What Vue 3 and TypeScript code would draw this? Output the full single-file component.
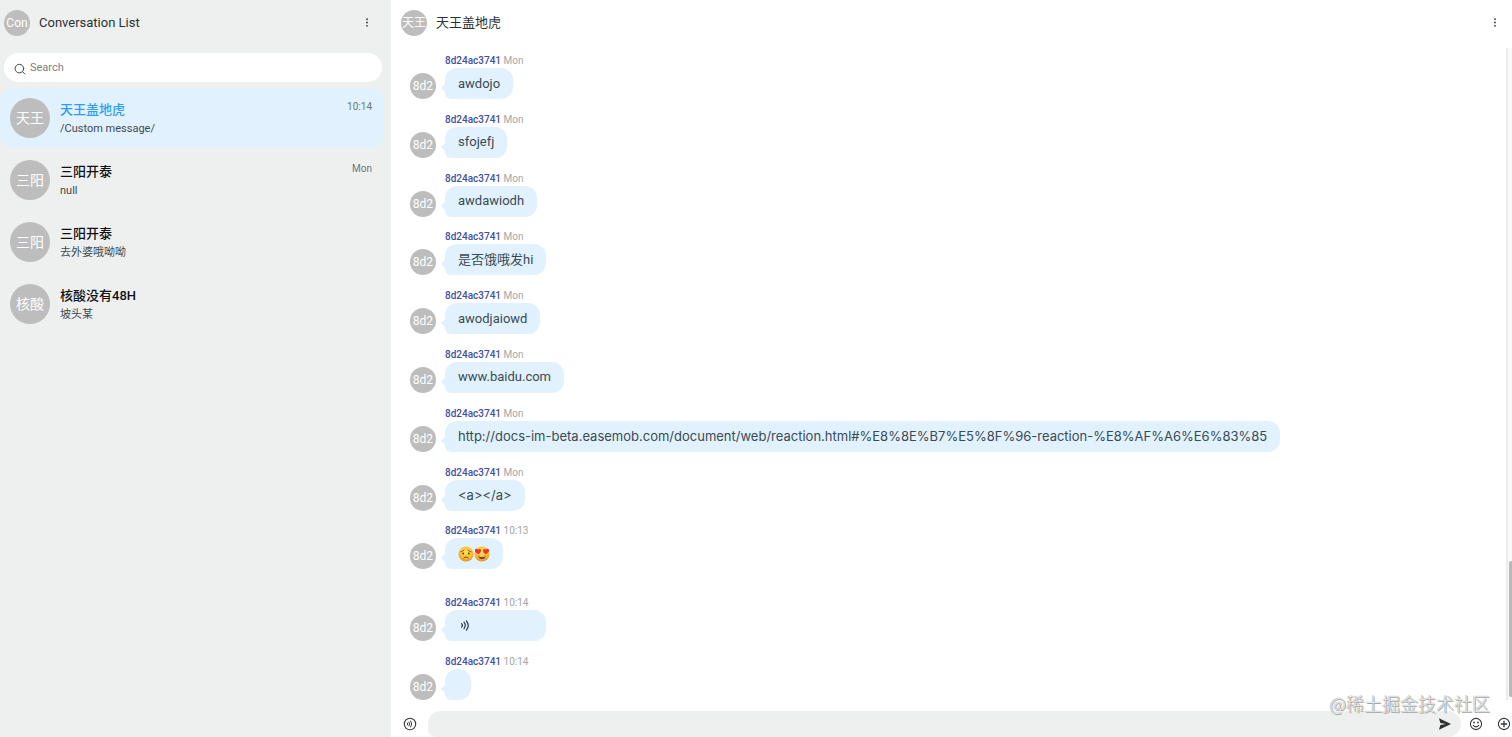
<script setup lang="ts">
import { ref } from 'vue'

interface Conversation {
  id: number
  name: string
  avatar: string
  preview: string
  time: string
}

interface Message {
  id: number
  kind: 'text' | 'link' | 'emoji' | 'audio' | 'empty'
  text: string
  time: string
}

const conversations: Conversation[] = [
  { id: 1, name: '天王盖地虎', avatar: '天王', preview: '/Custom message/', time: '10:14' },
  { id: 2, name: '三阳开泰', avatar: '三阳', preview: 'null', time: 'Mon' },
  { id: 3, name: '三阳开泰', avatar: '三阳', preview: '去外婆哦呦呦', time: '' },
  { id: 4, name: '核酸没有48H', avatar: '核酸', preview: '坡头某', time: '' },
]

const messages: Message[] = [
  { id: 1, kind: 'text', text: 'awdojo', time: 'Mon' },
  { id: 2, kind: 'text', text: 'sfojefj', time: 'Mon' },
  { id: 3, kind: 'text', text: 'awdawiodh', time: 'Mon' },
  { id: 4, kind: 'text', text: '是否饿哦发hi', time: 'Mon' },
  { id: 5, kind: 'text', text: 'awodjaiowd', time: 'Mon' },
  { id: 6, kind: 'text', text: 'www.baidu.com', time: 'Mon' },
  {
    id: 7,
    kind: 'link',
    text: 'http://docs-im-beta.easemob.com/document/web/reaction.html#%E8%8E%B7%E5%8F%96-reaction-%E8%AF%A6%E6%83%85',
    time: 'Mon',
  },
  { id: 8, kind: 'link', text: '<a></a>', time: 'Mon' },
  { id: 9, kind: 'emoji', text: '', time: '10:13' },
  { id: 10, kind: 'audio', text: '', time: '10:14' },
  { id: 11, kind: 'empty', text: '', time: '10:14' },
]

const sender = '8d24ac3741'
const activeId = ref(1)
const query = ref('')
const draft = ref('')
</script>

<template>
  <div class="app">
    <aside class="sidebar">
      <header class="bar">
        <span class="avatar small">Con</span>
        <h1 class="title">Conversation List</h1>
        <button class="icon-btn more" type="button" aria-label="List menu">
          <svg width="4" height="10" viewBox="0 0 4 10"><g fill="#33383b"><circle cx="2" cy="1.2" r=".9" /><circle cx="2" cy="4.5" r=".9" /><circle cx="2" cy="7.8" r=".9" /></g></svg>
        </button>
      </header>
      <label class="search">
        <svg width="12" height="12" viewBox="0 0 12 12" fill="none" stroke="#3f4548" stroke-linecap="round"><circle cx="5.4" cy="5.6" r="4.3" /><path d="M8.6 8.8 10.8 11" /></svg>
        <input v-model="query" type="text" placeholder="Search" aria-label="Search" />
      </label>
      <nav class="conversations">
        <button
          v-for="item in conversations"
          :key="item.id"
          type="button"
          class="conversation"
          :class="{ active: item.id === activeId }"
          @click="activeId = item.id"
        >
          <span class="avatar large">{{ item.avatar }}</span>
          <span class="summary">
            <span class="name">{{ item.name }}</span>
            <span class="preview">{{ item.preview }}</span>
          </span>
          <span class="time">{{ item.time }}</span>
        </button>
      </nav>
    </aside>

    <main class="chat">
      <header class="bar chat-bar">
        <span class="avatar small">天王</span>
        <h2 class="title">天王盖地虎</h2>
        <button class="icon-btn more" type="button" aria-label="Chat menu">
          <svg width="4" height="10" viewBox="0 0 4 10"><g fill="#33383b"><circle cx="2" cy="1.2" r=".9" /><circle cx="2" cy="4.5" r=".9" /><circle cx="2" cy="7.8" r=".9" /></g></svg>
        </button>
      </header>

      <section class="history">
        <div class="messages">
          <article v-for="m in messages" :key="m.id" class="message" :class="m.kind">
            <span class="avatar small">8d2</span>
            <div class="content">
              <div class="meta"><span class="sender">{{ sender }}</span> <span>{{ m.time }}</span></div>
              <div class="bubble">
                <template v-if="m.kind === 'text' || m.kind === 'link'">{{ m.text }}</template>
                <template v-else-if="m.kind === 'emoji'">
                  <svg width="16" height="16" viewBox="0 0 16 16">
                    <defs><radialGradient id="face" cx=".5" cy=".35" r=".65"><stop offset="0" stop-color="#ffe05c" /><stop offset=".65" stop-color="#fcbd2e" /><stop offset="1" stop-color="#e98a1c" /></radialGradient></defs>
                    <circle cx="8" cy="8" r="7.5" fill="url(#face)" />
                    <g fill="none" stroke="#6b3d10" stroke-linecap="round"><path d="M3 5.8Q4.8 5.4 6 4.2M13 5.8Q11.2 5.4 10 4.2" stroke-width=".8" /><path d="M5.8 11.8Q8 9.6 10.2 11.8" stroke-width=".9" /></g>
                    <g fill="#5a3210"><ellipse cx="5.2" cy="7.6" rx=".9" ry="1" /><ellipse cx="10.8" cy="7.6" rx=".9" ry="1" /></g>
                  </svg>
                  <svg width="16" height="16" viewBox="0 0 16 16">
                    <circle cx="8" cy="8" r="7.5" fill="url(#face)" />
                    <path d="M4.3 9.5Q8 10.8 11.7 9.5Q11.2 13 8 13Q4.8 13 4.3 9.5Z" fill="#6b3510" />
                    <path d="M5 10Q8 10.9 11 10L10.7 10.8Q8 11.5 5.3 10.8Z" fill="#fff" />
                    <g fill="#e8352e"><path d="M4.3 8.2C1.6 6.8.5 5.3 1 3.8 1.6 2.4 3.4 2.5 4.1 3.7 5.1 2.6 6.8 2.9 7 4.4 7.1 5.7 6 7 4.3 8.2Z" /><path d="M11.7 8.2C14.4 6.8 15.5 5.3 15 3.8 14.4 2.4 12.6 2.5 11.9 3.7 10.9 2.6 9.2 2.9 9 4.4 8.9 5.7 10 7 11.7 8.2Z" /></g>
                  </svg>
                </template>
                <svg v-else-if="m.kind === 'audio'" width="14" height="14" viewBox="0 0 14 14" fill="none" stroke="#2c3a42" stroke-width="1.2" stroke-linecap="round"><path d="M3.6 4.7Q5.2 6.4 3.6 8.1M6 3.2Q8.6 6.4 6 9.6M8.4 1.8Q12 6.4 8.4 11.2" /></svg>
              </div>
            </div>
          </article>
        </div>
        <div class="track"><span class="thumb"></span></div>
      </section>

      <form class="composer" @submit.prevent="draft = ''">
        <button class="icon-btn" type="button" aria-label="Record audio">
          <svg width="14" height="14" viewBox="0 0 14 14" fill="none" stroke="#33383b" stroke-linecap="round"><circle cx="7" cy="7" r="5.7" stroke-width="1.1" /><path d="M4.4 6Q5.1 7 4.4 8M6 5Q7.4 7 6 9M7.7 4Q9.9 7 7.7 10" /></svg>
        </button>
        <div class="field">
          <input v-model="draft" type="text" aria-label="Message" />
          <button class="icon-btn" type="submit" aria-label="Send">
            <svg width="14" height="14" viewBox="0 0 14 14"><path d="M1 1.2 13 7 1 12.8 2.3 8 8 7 2.3 6Z" fill="#2b3033" /></svg>
          </button>
        </div>
        <button class="icon-btn" type="button" aria-label="Emoji">
          <svg width="14" height="14" viewBox="0 0 14 14" fill="none" stroke="#33383b" stroke-width="1.1" stroke-linecap="round"><circle cx="7" cy="7" r="5.6" /><path d="M4.3 8.4Q7 11.4 9.7 8.4" /><g fill="#33383b" stroke="none"><circle cx="5" cy="5.5" r=".9" /><circle cx="9" cy="5.5" r=".9" /></g></svg>
        </button>
        <button class="icon-btn" type="button" aria-label="Add attachment">
          <svg width="14" height="14" viewBox="0 0 14 14" fill="none" stroke="#33383b" stroke-width="1.3"><circle cx="7" cy="7" r="5.6" stroke-width="1.1" /><path d="M7 3.8V10.2M3.8 7H10.2" /></svg>
        </button>
      </form>
      <span class="watermark">@稀土掘金技术社区</span>
    </main>
  </div>
</template>

<style>
body {
  margin: 0;
  overflow: hidden;
}
</style>

<style scoped>
.app {
  display: flex;
  height: 100vh;
  overflow: hidden;
  background: #fff;
  color: #2c3134;
  font-family: Roboto, "Noto Sans CJK SC", sans-serif;
  font-size: 13px;
}
button,
input {
  padding: 0;
  border: 0;
  background: none;
  color: inherit;
  font: inherit;
  outline: none;
}
svg {
  display: block;
  flex: none;
}
.sidebar {
  box-sizing: border-box;
  flex: none;
  width: 391px;
  padding-right: 7px;
  background: #eef0f0;
}
.bar {
  display: flex;
  align-items: center;
  height: 46px;
  padding-left: 4px;
}
.chat-bar {
  flex: none;
  padding: 0 15px 0 10px;
}
.title {
  margin: 0 0 0 9px;
  flex: 1;
  font-size: 13px;
  line-height: 20px;
  font-weight: 400;
}
.avatar {
  display: flex;
  align-items: center;
  justify-content: center;
  flex: none;
  overflow: hidden;
  border-radius: 50%;
  background: #bdbdbd;
  color: #fff;
  white-space: nowrap;
}
.small {
  width: 26px;
  height: 26px;
  font-size: 12px;
  line-height: 16px;
}
.large {
  width: 40px;
  height: 40px;
  font-size: 14px;
  line-height: 20px;
}
.icon-btn {
  display: flex;
  align-items: center;
  justify-content: center;
  flex: none;
  cursor: pointer;
}
.sidebar .more {
  margin-right: 15px;
}
.search {
  display: flex;
  align-items: center;
  gap: 4px;
  height: 29px;
  margin: 7px 2px 6px 4px;
  padding: 0 10px;
  border-radius: 15px;
  background: #fff;
}
.search svg {
  margin-top: 2px;
}
.search input {
  flex: 1;
  min-width: 0;
  font-size: 11px;
}
.search input::placeholder {
  color: #7d8183;
  opacity: 1;
}
.conversations {
  display: flex;
  flex-direction: column;
  gap: 2px;
}
.conversation {
  display: flex;
  align-items: center;
  gap: 10px;
  height: 60px;
  padding: 0 12px 0 10px;
  border-radius: 12px;
  text-align: left;
  cursor: pointer;
}
.conversation.active {
  background: #e1f2fe;
}
.summary {
  display: flex;
  flex: 1;
  flex-direction: column;
  min-width: 0;
  padding-top: 4px;
}
.name {
  color: #111;
  font-weight: 500;
  line-height: 18px;
}
.active .name {
  color: #2f9cf4;
}
.preview {
  color: #3d4a52;
  font-size: 11px;
  line-height: 20px;
}
.time {
  align-self: flex-start;
  padding-top: 12px;
  color: #6d767b;
  font-size: 10px;
  line-height: 14px;
}
.chat {
  position: relative;
  display: flex;
  flex: 1;
  flex-direction: column;
  min-width: 0;
}
.history {
  display: flex;
  flex: 1;
  min-height: 0;
}
.messages {
  display: flex;
  flex: 1;
  flex-direction: column;
  justify-content: space-between;
  min-width: 0;
  padding: 8px 0 0 19px;
}
.message {
  display: flex;
  align-items: flex-end;
  gap: 9px;
}
.message.emoji {
  margin-bottom: 13px;
}
.meta {
  color: #a3a6a8;
  font-size: 10px;
  line-height: 14px;
}
.sender {
  color: #3f51a5;
  font-weight: 500;
}
.bubble {
  position: relative;
  display: flex;
  align-items: center;
  box-sizing: border-box;
  width: fit-content;
  height: 31px;
  padding: 0 13px;
  border-radius: 12px 12px 12px 6px;
  background: #e1f2fe;
  color: #3a4a54;
  line-height: 20px;
}
.bubble::before {
  position: absolute;
  bottom: 6px;
  left: -4px;
  border-top: 5px solid transparent;
  border-right: 5px solid #e1f2fe;
  border-bottom: 5px solid transparent;
  content: "";
}
.link .bubble {
  font-family: Inter, "Noto Sans CJK SC", sans-serif;
}
.audio .bubble {
  width: 101px;
}
.track {
  box-sizing: border-box;
  display: flex;
  align-items: flex-end;
  justify-content: flex-end;
  width: 6px;
  margin-top: 2px;
  padding-bottom: 3px;
  border-left: 2px solid #ececec;
  background: #fafafa;
}
.thumb {
  width: 3px;
  height: 21%;
  border-radius: 2px 0 0 2px;
  background: #b9b9b9;
}
.composer {
  display: flex;
  flex: none;
  gap: 8px;
  height: 26px;
  padding: 11px 1px 0 12px;
}
.composer > .icon-btn {
  width: 14px;
  height: 26px;
}
.composer > .icon-btn + .icon-btn {
  margin-left: 6px;
}
.field {
  display: flex;
  flex: 1;
  align-items: center;
  min-width: 0;
  margin-left: 3px;
  padding: 0 9px 0 16px;
  border-radius: 14px 14px 14px 8px;
  background: #eef0f0;
}
.field input {
  flex: 1;
  min-width: 0;
}
.watermark {
  position: absolute;
  right: 22px;
  bottom: 21px;
  color: #eaeaea;
  font-family: "Noto Sans CJK SC", sans-serif;
  font-size: 18px;
  font-weight: 300;
  line-height: 26px;
  text-shadow: 0 0 1px #777, 1px 1px 0 #aaa;
  pointer-events: none;
}
</style>
